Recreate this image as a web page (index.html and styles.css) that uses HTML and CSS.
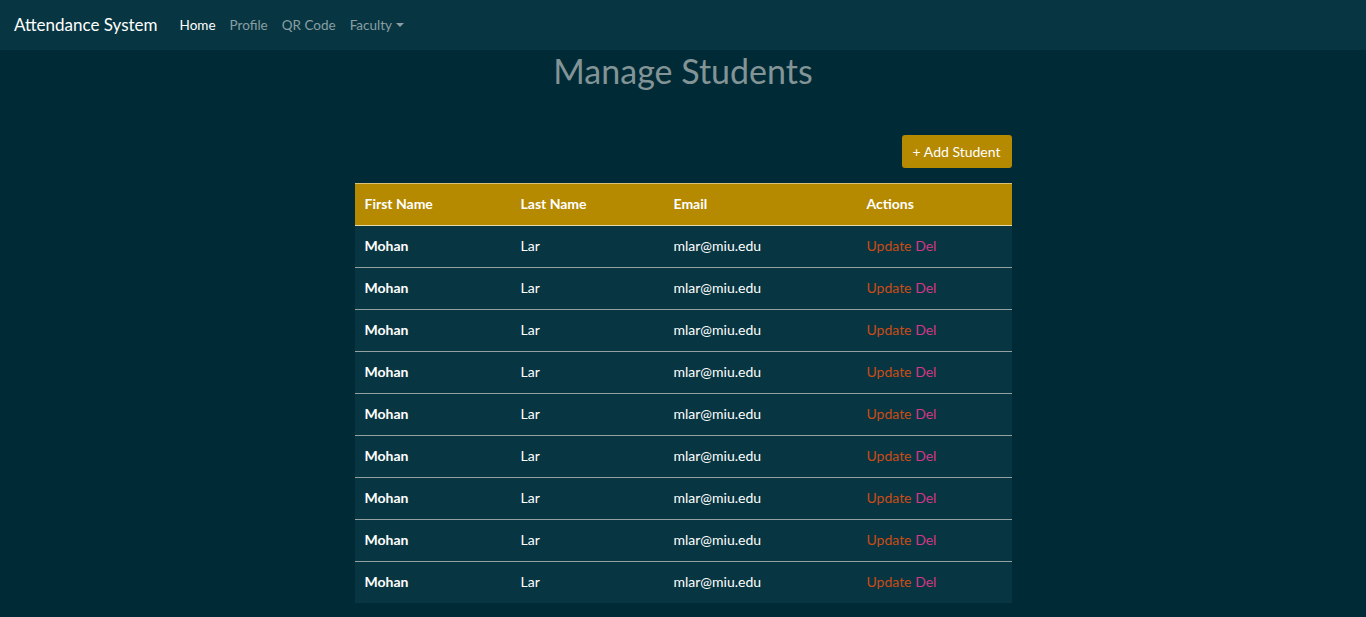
FILE: index.html
```html
<!DOCTYPE html>
<html>
<head>
<meta charset="utf-8">
<link rel="stylesheet" href="styles.css">
</head>
<body>
<nav class="navbar">
  <a class="brand">Attendance System</a>
  <ul class="nav">
    <li class="active">Home</li>
    <li>Profile</li>
    <li>QR Code</li>
    <li class="dropdown">Faculty<span class="caret"></span></li>
  </ul>
</nav>
<main class="main">
  <h1 class="title">Manage Students</h1>
  <div class="content">
    <div class="toolbar"><button class="btn">+ Add Student</button></div>
    <table class="table">
      <thead>
        <tr><th class="c1">First Name</th><th class="c2">Last Name</th><th class="c3">Email</th><th class="c4">Actions</th></tr>
      </thead>
      <tbody>
        <tr><td class="name">Mohan</td><td>Lar</td><td>mlar@miu.edu</td><td><span class="upd">Update</span> <span class="del">Del</span></td></tr>
        <tr><td class="name">Mohan</td><td>Lar</td><td>mlar@miu.edu</td><td><span class="upd">Update</span> <span class="del">Del</span></td></tr>
        <tr><td class="name">Mohan</td><td>Lar</td><td>mlar@miu.edu</td><td><span class="upd">Update</span> <span class="del">Del</span></td></tr>
        <tr><td class="name">Mohan</td><td>Lar</td><td>mlar@miu.edu</td><td><span class="upd">Update</span> <span class="del">Del</span></td></tr>
        <tr><td class="name">Mohan</td><td>Lar</td><td>mlar@miu.edu</td><td><span class="upd">Update</span> <span class="del">Del</span></td></tr>
        <tr><td class="name">Mohan</td><td>Lar</td><td>mlar@miu.edu</td><td><span class="upd">Update</span> <span class="del">Del</span></td></tr>
        <tr><td class="name">Mohan</td><td>Lar</td><td>mlar@miu.edu</td><td><span class="upd">Update</span> <span class="del">Del</span></td></tr>
        <tr><td class="name">Mohan</td><td>Lar</td><td>mlar@miu.edu</td><td><span class="upd">Update</span> <span class="del">Del</span></td></tr>
        <tr><td class="name">Mohan</td><td>Lar</td><td>mlar@miu.edu</td><td><span class="upd">Update</span> <span class="del">Del</span></td></tr>
      </tbody>
    </table>
  </div>
</main>
</body>
</html>
```
FILE: styles.css
```css
* { box-sizing: border-box; }
html, body { margin: 0; padding: 0; }
body {
  background: #002b36;
  font-family: "Lato", "Liberation Sans", sans-serif;
  color: #fff;
  height: 617px;
  overflow: hidden;
}
.navbar {
  height: 50px;
  background: #073642;
  display: flex;
  align-items: center;
  padding: 0 14px 1px;
}
.brand {
  font-size: 17px;
  color: #fff;
  margin-right: 22px;
}
.nav {
  display: flex;
  list-style: none;
  margin: 0;
  padding: 0;
  gap: 14px;
  font-size: 13.5px;
  color: #8a9ea3;
}
.nav .active { color: #fff; }
.caret {
  display: inline-block;
  margin-left: 4px;
  vertical-align: 3px;
  border-top: 4px solid #8a9ea3;
  border-left: 4px solid transparent;
  border-right: 4px solid transparent;
}
.title {
  margin: 0;
  text-align: center;
  font-weight: 400;
  font-size: 34px;
  line-height: 42px;
  color: #839496;
}
.content {
  width: 657px;
  margin: 43px auto 0;
}
.toolbar {
  display: flex;
  justify-content: flex-end;
  margin-bottom: 15px;
}
.btn {
  background: #b58900;
  border: none;
  border-radius: 3px;
  color: #fff;
  font-family: inherit;
  font-size: 14px;
  height: 33px;
  padding: 0 11px 1px;
}
.table {
  width: 100%;
  border-collapse: collapse;
  font-size: 14px;
}
.table th, .table td {
  text-align: left;
  padding: 0 10px 2px;
  height: 42px;
}
.table thead tr {
  background: #b58900;
  border-top: 1px solid #d9c27a;
  border-bottom: 1px solid #e6d9a8;
}
.table th { font-weight: 700; }
.table tbody tr {
  background: #073642;
  border-bottom: 1px solid #93a1a1;
}
.table tbody tr:last-child { border-bottom: none; }
.table tbody tr:last-child td { height: 41px; }
.c1 { width: 156px; }
.c2 { width: 153px; }
.c3 { width: 193px; }
.name { font-weight: 700; }
.upd { color: #cb4b16; }
.del { color: #d33682; }
```
